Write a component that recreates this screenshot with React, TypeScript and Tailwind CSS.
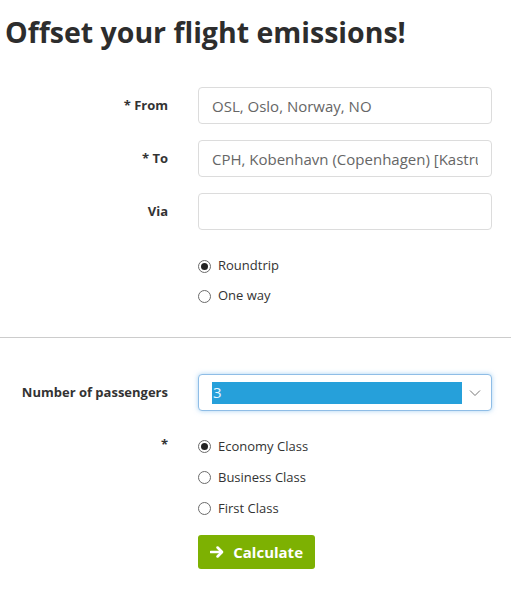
import React from "react";

function Radio({ checked, label }: { checked?: boolean; label: string }) {
  return (
    <div className="flex h-[30px] items-center">
      <span className="flex h-[13px] w-[13px] items-center justify-center rounded-full border border-[#6b6b6b] bg-white">
        {checked ? <span className="h-[7px] w-[7px] rounded-full bg-[#222]" /> : null}
      </span>
      <span className="ml-[7px] text-[13px] text-[#333]">{label}</span>
    </div>
  );
}

function Row({ label, children }: { label: string; children: React.ReactNode }) {
  return (
    <div className="flex items-center">
      <div className="w-[168px] text-right text-[13px] font-bold text-[#333]">{label}</div>
      <div className="ml-[30px] w-[294px]">{children}</div>
    </div>
  );
}

function TextInput({ value }: { value: string }) {
  return (
    <input
      readOnly
      value={value}
      className="block h-[37px] w-full rounded-[4px] border border-[#dcdcdc] bg-white px-[13px] text-[15px] text-[#666] outline-none font-['Open_Sans',sans-serif]"
    />
  );
}

export default function App() {
  return (
    <div className="w-[511px] bg-white font-['Open_Sans',sans-serif] text-[#333]">
      <h1 className="pl-[5px] pt-[13px] text-[28.5px] font-bold leading-[38px] text-[#2d2d2d]">
        Offset your flight emissions!
      </h1>

      <div className="mt-[36px] flex flex-col gap-4">
        <Row label="* From">
          <TextInput value="OSL, Oslo, Norway, NO" />
        </Row>
        <Row label="* To">
          <TextInput value="CPH, Kobenhavn (Copenhagen) [Kastrup], Denmark, DK" />
        </Row>
        <Row label="Via">
          <TextInput value="" />
        </Row>
      </div>

      <div className="ml-[198px] mt-[21px]">
        <Radio checked label="Roundtrip" />
        <Radio label="One way" />
      </div>

      <div className="mt-[26px] border-t border-[#cccccc]" />

      <div className="mt-[36px]">
        <Row label="Number of passengers">
          <div className="flex h-[37px] w-full items-center rounded-[4px] border border-[#8fbde6] bg-white pl-[13px] pr-[10px] shadow-[0_0_5px_rgba(102,175,233,0.55)]">
            <div className="flex h-[22px] flex-1 items-center bg-[#26a0da] pl-[1px] text-[15px] text-[#e8f6ff]">3</div>
            <svg className="ml-[7px]" width="12" height="8" viewBox="0 0 12 8">
              <path d="M1 1.5 L6 6.5 L11 1.5" fill="none" stroke="#777" strokeWidth="1" />
            </svg>
          </div>
        </Row>
      </div>

      <div className="mt-[20px] flex">
        <div className="w-[168px] pt-[3px] text-right text-[13px] font-bold leading-[20px] text-[#333]">*</div>
        <div className="ml-[30px] flex flex-col">
          <div className="flex h-[31px] items-center">
            <Radio checked label="Economy Class" />
          </div>
          <div className="flex h-[31px] items-center">
            <Radio label="Business Class" />
          </div>
          <div className="flex h-[31px] items-center">
            <Radio label="First Class" />
          </div>
          <button className="mt-[11px] flex h-[34px] w-[117px] items-center rounded-[3px] bg-[#7db102] px-[12px] text-[15px] font-bold text-white">
            <svg width="16" height="14" viewBox="0 0 16 14">
              <path d="M1 7 H13" stroke="white" strokeWidth="3" strokeLinecap="round" />
              <path d="M8.5 2 L13.5 7 L8.5 12" fill="none" stroke="white" strokeWidth="3" strokeLinecap="round" strokeLinejoin="round" />
            </svg>
            <span className="ml-[9px]">Calculate</span>
          </button>
        </div>
      </div>
      <div className="h-[35px]" />
    </div>
  );
}
